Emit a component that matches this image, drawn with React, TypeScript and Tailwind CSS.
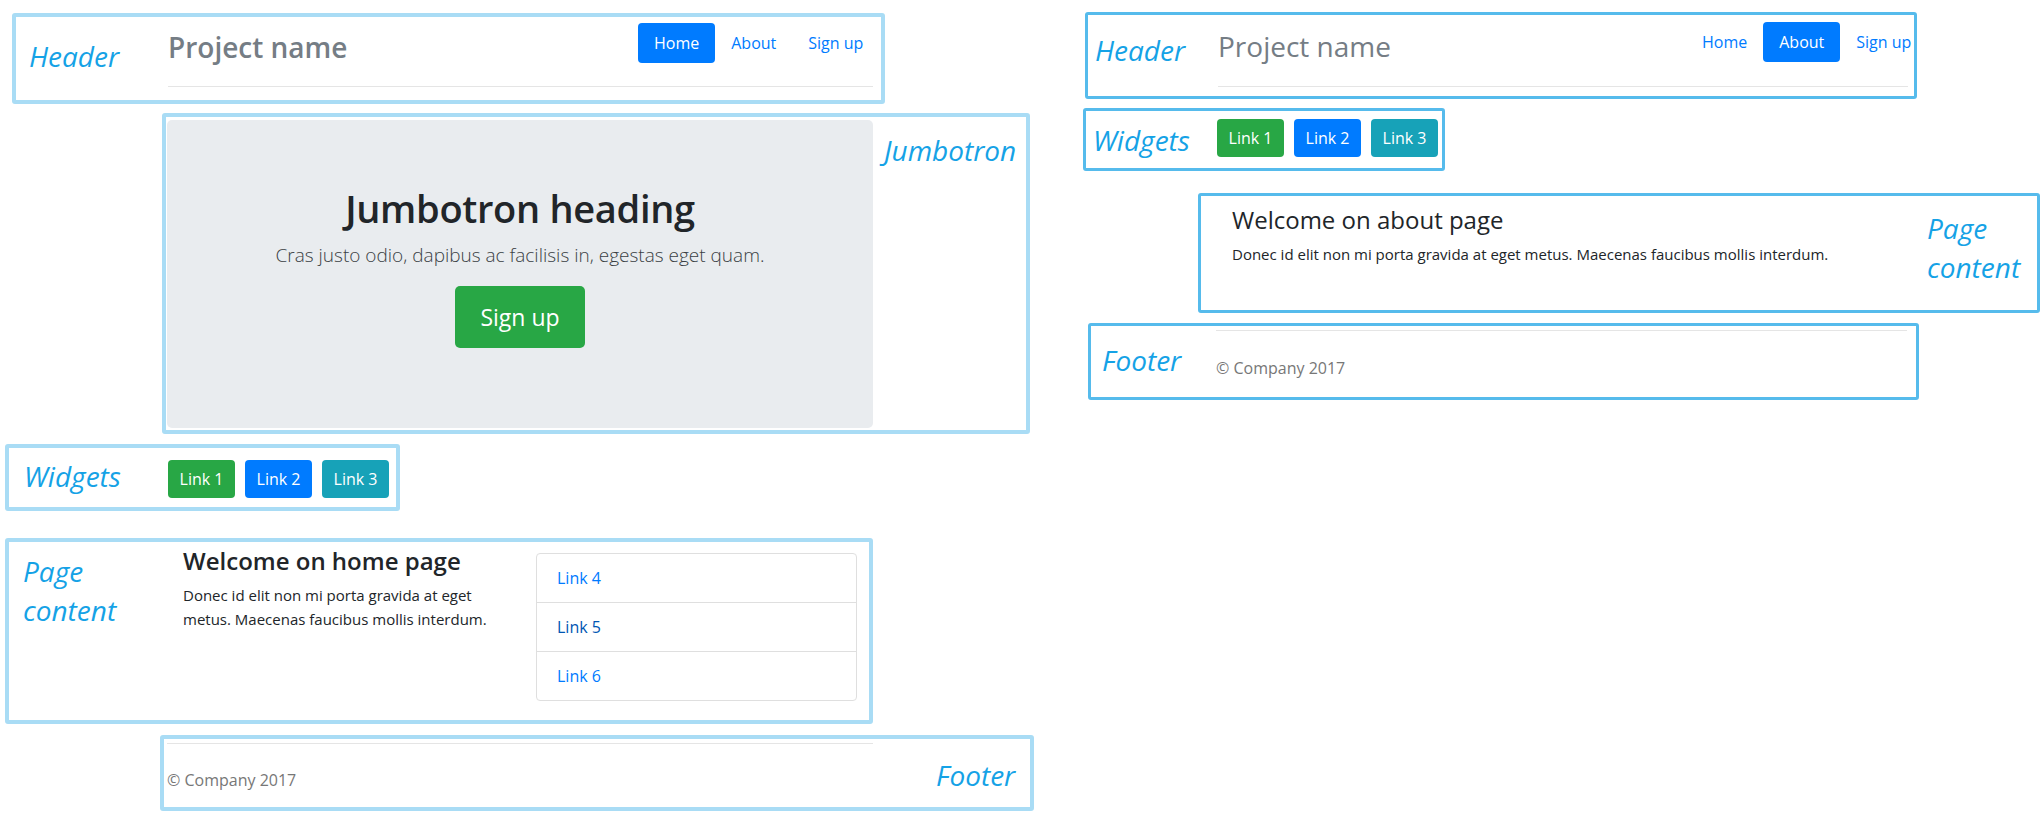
import React from "react";

function Label({ children, className = "" }: { children: React.ReactNode; className?: string }) {
  return (
    <div className={"italic text-[28px] leading-[39px] text-[#15a2e6] whitespace-nowrap " + className}>
      {children}
    </div>
  );
}

function Pill({ label, active }: { label: string; active?: boolean }) {
  return (
    <span
      className={
        "px-4 py-2 text-[16px] leading-6 rounded-[4px] whitespace-nowrap " +
        (active ? "bg-[#007bff] text-white" : "text-[#007bff]")
      }
    >
      {label}
    </span>
  );
}

function WidgetButtons() {
  return (
    <div className="flex gap-[10px]">
      <span className="w-[67px] h-[38px] flex items-center justify-center rounded-[4px] bg-[#28a745] text-white text-[16px]">Link 1</span>
      <span className="w-[67px] h-[38px] flex items-center justify-center rounded-[4px] bg-[#007bff] text-white text-[16px]">Link 2</span>
      <span className="w-[67px] h-[38px] flex items-center justify-center rounded-[4px] bg-[#17a2b8] text-white text-[16px]">Link 3</span>
    </div>
  );
}

export default function App() {
  return (
    <div className="flex items-start bg-white min-h-screen font-['Open_Sans',sans-serif] text-[#212529]">
      {/* LEFT: Home page */}
      <div className="w-[1083px] shrink-0 flex flex-col">
        {/* Header */}
        <div className="ml-[12px] mt-[13px] w-[873px] h-[91px] border-4 border-[#a9dcf5] rounded-[3px] flex">
          <div className="w-[152px] shrink-0 pl-[13px] pt-[20px]">
            <Label>Header</Label>
          </div>
          <div className="w-[705px] shrink-0 pt-[6px] pb-[23px] border-b border-[#e5e5e5] h-[70px]">
            <div className="flex h-[40px] items-start">
              <div className="w-[470px] shrink-0 text-[28px] leading-[34px] font-semibold text-[#757d85] mt-[7px]">Project name</div>
              <div className="flex items-center h-[40px]">
                <Pill label="Home" active />
                <Pill label="About" />
                <Pill label="Sign up" />
              </div>
            </div>
          </div>
        </div>

        {/* Jumbotron */}
        <div className="ml-[162px] mt-[9px] w-[868px] h-[321px] border-4 border-[#a9dcf5] rounded-[3px] flex items-start">
          <div className="ml-[1px] mt-[3px] w-[706px] h-[308px] shrink-0 bg-[#e9ecef] rounded-[5px] pt-[64px] flex flex-col items-center text-center">
            <h1 className="text-[38px] leading-[48px] font-semibold mb-[8px] tracking-[-0.3px]">Jumbotron heading</h1>
            <p className="text-[19px] leading-[30px] font-light mb-[16px] text-[#3a3f44]">Cras justo odio, dapibus ac facilisis in, egestas eget quam.</p>
            <span className="w-[130px] h-[62px] flex items-center justify-center bg-[#28a745] text-white text-[23px] rounded-[5px]">Sign up</span>
          </div>
          <div className="ml-[11px] pt-[14px]">
            <Label>Jumbotron</Label>
          </div>
        </div>

        {/* Widgets */}
        <div className="ml-[5px] mt-[10px] w-[395px] h-[67px] border-4 border-[#a9dcf5] rounded-[3px] flex items-start">
          <div className="w-[159px] shrink-0 pl-[15px] pt-[9px]">
            <Label>Widgets</Label>
          </div>
          <div className="pt-[12px]">
            <WidgetButtons />
          </div>
        </div>

        {/* Page content */}
        <div className="ml-[5px] mt-[27px] w-[868px] h-[186px] border-4 border-[#a9dcf5] rounded-[3px] flex items-start">
          <div className="w-[174px] shrink-0 pl-[14px] pt-[10px]">
            <Label>Page</Label>
            <Label>content</Label>
          </div>
          <div className="w-[353px] shrink-0 pt-[4px] pr-[28px]">
            <h4 className="text-[24px] leading-[29px] font-semibold mb-[8px]">Welcome on home page</h4>
            <p className="text-[15px] leading-6">Donec id elit non mi porta gravida at eget metus. Maecenas faucibus mollis interdum.</p>
          </div>
          <div className="w-[321px] shrink-0 mt-[11px] flex flex-col text-[16px] leading-6">
            <span className="px-5 py-3 border border-[#dfdfdf] rounded-t-[4px] text-[#007bff]">Link 4</span>
            <span className="px-5 py-3 border border-[#dfdfdf] -mt-px text-[#0056b3]">Link 5</span>
            <span className="px-5 py-3 border border-[#dfdfdf] -mt-px rounded-b-[4px] text-[#007bff]">Link 6</span>
          </div>
        </div>

        {/* Footer */}
        <div className="ml-[160px] mt-[11px] w-[874px] h-[76px] border-4 border-[#a9dcf5] rounded-[3px] flex items-start">
          <div className="ml-[3px] mt-[4px] w-[706px] shrink-0 border-t border-[#e5e5e5] pt-[24px] text-[16px] leading-6 text-[#777]">
            © Company 2017
          </div>
          <div className="ml-[63px] pt-[17px]">
            <Label>Footer</Label>
          </div>
        </div>
      </div>

      {/* RIGHT: About page */}
      <div className="flex-1 flex flex-col">
        {/* Header */}
        <div className="ml-[2px] mt-[12px] w-[832px] h-[87px] border-[3px] border-[#56bbec] rounded-[3px] flex">
          <div className="w-[130px] shrink-0 pl-[7px] pt-[16px]">
            <Label>Header</Label>
          </div>
          <div className="w-[690px] shrink-0 pt-[7px] border-b border-[#e5e5e5] h-[72px]">
            <div className="flex h-[40px] items-start w-[705px]">
              <div className="w-[468px] shrink-0 text-[28px] leading-[34px] text-[#757d85] mt-[7px]">Project name</div>
              <div className="flex items-center h-[40px]">
                <Pill label="Home" />
                <Pill label="About" active />
                <Pill label="Sign up" />
              </div>
            </div>
          </div>
        </div>

        {/* Widgets */}
        <div className="mt-[9px] w-[362px] h-[63px] border-[3px] border-[#56bbec] rounded-[3px] flex items-start">
          <div className="w-[131px] shrink-0 pl-[7px] pt-[10px]">
            <Label>Widgets</Label>
          </div>
          <div className="pt-[8px]">
            <WidgetButtons />
          </div>
        </div>

        {/* Page content */}
        <div className="ml-[115px] mt-[22px] w-[842px] h-[120px] border-[3px] border-[#56bbec] rounded-[3px] flex items-start">
          <div className="w-[726px] shrink-0 pl-[31px] pt-[9px]">
            <h4 className="text-[24px] leading-[29px] mb-[8px]">Welcome on about page</h4>
            <p className="text-[15px] leading-6">Donec id elit non mi porta gravida at eget metus. Maecenas faucibus mollis interdum.</p>
          </div>
          <div className="pt-[13px]">
            <Label>Page</Label>
            <Label>content</Label>
          </div>
        </div>

        {/* Footer */}
        <div className="ml-[5px] mt-[10px] w-[831px] h-[77px] border-[3px] border-[#56bbec] rounded-[3px] flex items-start">
          <div className="w-[125px] shrink-0 pl-[11px] pt-[15px]">
            <Label>Footer</Label>
          </div>
          <div className="w-[691px] shrink-0 mt-[4px] border-t border-[#e5e5e5] pt-[25px] text-[16px] leading-6 text-[#777]">
            © Company 2017
          </div>
        </div>
      </div>
    </div>
  );
}
